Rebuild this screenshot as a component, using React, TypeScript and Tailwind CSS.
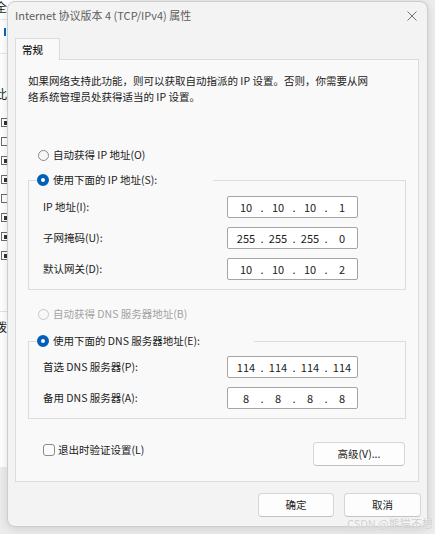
import { Fragment } from "react";

const uiFont = "font-['Noto_Sans_CJK_SC','Noto_Sans',sans-serif]";

function Radio({ checked = false, disabled = false }: { checked?: boolean; disabled?: boolean }) {
  if (checked) {
    return <span className="w-3 h-3 shrink-0 rounded-full border-4 border-[#005fb8] bg-white" />;
  }
  return (
    <span
      className={
        disabled
          ? "w-[11px] h-[11px] shrink-0 rounded-full border border-[#c8c8c8] bg-[#f8f8f8]"
          : "w-[11px] h-[11px] shrink-0 rounded-full border border-[#8b8b8b] bg-[#f6f6f6]"
      }
    />
  );
}

function RadioOption({ label, checked, disabled }: { label: string; checked?: boolean; disabled?: boolean }) {
  return (
    <div className={`flex items-center gap-[4px] h-4 leading-4 ${disabled ? "text-[#a3a3a3]" : "text-[#1b1b1b]"}`}>
      <Radio checked={checked} disabled={disabled} />
      <span>{label}</span>
    </div>
  );
}

function IpBox({ parts }: { parts: string[] }) {
  return (
    <div className="w-[131px] h-[22px] bg-white border border-[#a5a5a5] rounded-[2px] flex items-center pl-[6px] text-[11px] text-[#1b1b1b]">
      {parts.map((p, i) => (
        <Fragment key={i}>
          {i > 0 && <span className="w-[8px] text-center">.</span>}
          <span className="w-[24px] text-center">{p}</span>
        </Fragment>
      ))}
    </div>
  );
}

function FieldRow({ label, parts }: { label: string; parts: string[] }) {
  return (
    <div className="flex items-center justify-between h-[22px] pl-[14px] pr-[47px]">
      <span className="leading-4">{label}</span>
      <IpBox parts={parts} />
    </div>
  );
}

function Button({ children, className = "" }: { children: string; className?: string }) {
  return (
    <button
      className={`h-[24px] rounded-[4px] border border-[#d6d6d6] border-b-[#c2c2c2] bg-[#fdfdfd] text-[#1b1b1b] text-[10.5px] ${className}`}
    >
      {children}
    </button>
  );
}

// the settings window peeking out behind the dialog
function ParentWindow() {
  const rows = [true, false, true, true, false, true, true, true];
  return (
    <div className="absolute left-0 top-0 w-[120px] h-[467px] bg-white text-[12px] text-[#1b1b1b] flex flex-col">
      <span className="-ml-[5px] leading-[13px]">全</span>
      <div className="mt-[6px] h-px bg-[#e6e6e6]" />
      <div className="mt-[8px] ml-[4px] w-[2px] h-[8px] bg-[#0067c0]" />
      <div className="mt-[17px] h-px bg-[#e6e6e6]" />
      <span className="mt-[33px] -ml-[5px] leading-[13px]">此</span>
      <div className="mt-[18px] flex flex-col gap-[10px] ml-[1px]">
        {rows.map((on, i) => (
          <span key={i} className="w-[9px] h-[9px] border border-[#6a6a6a] flex items-center justify-center">
            {on && <span className="w-[4px] h-[4px] bg-[#333]" />}
          </span>
        ))}
      </div>
      <div className="mt-[51px] h-px bg-[#e2e2e2]" />
      <span className="mt-[8px] -ml-[5px] leading-[13px]">拨</span>
    </div>
  );
}

export default function App() {
  return (
    <div className={`relative w-[435px] h-[534px] overflow-hidden bg-[#ececec] ${uiFont}`}>
      <ParentWindow />

      <div className="absolute left-[7px] top-[1px] w-[421px] h-[526px] rounded-[8px] border border-[#cdcdcd] bg-[#f3f3f3] shadow-[0_2px_10px_rgba(0,0,0,0.12)] flex flex-col text-[10.5px] text-[#1b1b1b]">
        {/* title bar */}
        <div className="h-[36px] flex items-start justify-between pl-[7px] pr-[10px]">
          <span className="mt-[5px] leading-4 text-[11px] text-[#5e5e5e]">Internet 协议版本 4 (TCP/IPv4) 属性</span>
          <svg className="mt-[9px]" width="10" height="10" viewBox="0 0 10 10">
            <path d="M0.5 0.5L9.5 9.5M9.5 0.5L0.5 9.5" stroke="#707070" strokeWidth="1" />
          </svg>
        </div>

        {/* tab strip */}
        <div className="flex ml-[7px]">
          <div className="relative z-10 -mb-px w-[45px] h-[22px] border border-b-0 border-[#dcdcdc] bg-[#f9f9f9] pl-[6px] pt-[3px] leading-4 font-medium">
            常规
          </div>
        </div>

        {/* tab page */}
        <div className="ml-[7px] w-[404px] h-[423px] border border-[#dcdcdc] bg-[#f9f9f9] flex flex-col">
          <p className="mt-[13px] ml-[12px] leading-4">
            如果网络支持此功能，则可以获取自动指派的 IP 设置。否则，你需要从网
            <br />
            络系统管理员处获得适当的 IP 设置。
          </p>

          <div className="mt-[42px] ml-[22px]">
            <RadioOption label="自动获得 IP 地址(O)" />
          </div>

          <fieldset className="mt-[9px] ml-[12px] w-[378px] border border-[#dcdcdc] pt-[8px] pb-[9px] flex flex-col gap-[9px]">
            <legend className="ml-[8px] pr-[56px]">
              <RadioOption label="使用下面的 IP 地址(S):" checked />
            </legend>
            <FieldRow label="IP 地址(I):" parts={["10", "10", "10", "1"]} />
            <FieldRow label="子网掩码(U):" parts={["255", "255", "255", "0"]} />
            <FieldRow label="默认网关(D):" parts={["10", "10", "10", "2"]} />
          </fieldset>

          <div className="mt-[16px] ml-[22px]">
            <RadioOption label="自动获得 DNS 服务器地址(B)" disabled />
          </div>

          <fieldset className="mt-[11px] ml-[12px] w-[378px] border border-[#dcdcdc] pt-[7px] pb-[9px] flex flex-col gap-[9px]">
            <legend className="ml-[8px] pr-[54px]">
              <RadioOption label="使用下面的 DNS 服务器地址(E):" checked />
            </legend>
            <FieldRow label="首选 DNS 服务器(P):" parts={["114", "114", "114", "114"]} />
            <FieldRow label="备用 DNS 服务器(A):" parts={["8", "8", "8", "8"]} />
          </fieldset>

          <div className="mt-[23px] flex items-start justify-between pl-[27px] pr-[13px]">
            <label className="flex items-center gap-[3px] h-4 leading-4">
              <span className="w-[12px] h-[12px] rounded-[3px] border border-[#8b8b8b] bg-[#fbfbfb]" />
              退出时验证设置(L)
            </label>
            <Button className="w-[92px]">高级(V)...</Button>
          </div>
        </div>

        {/* dialog buttons */}
        <div className="mt-[11px] flex justify-end gap-[10px] pr-[6px]">
          <Button className="w-[76px]">确定</Button>
          <Button className="w-[77px]">取消</Button>
        </div>
      </div>

      <span className="absolute left-[347px] top-[516px] text-[11px] leading-[14px] text-[#cfcfcf] [text-shadow:0_0_1px_#ffffff]">
        CSDN @熊猫不想
      </span>
    </div>
  );
}
